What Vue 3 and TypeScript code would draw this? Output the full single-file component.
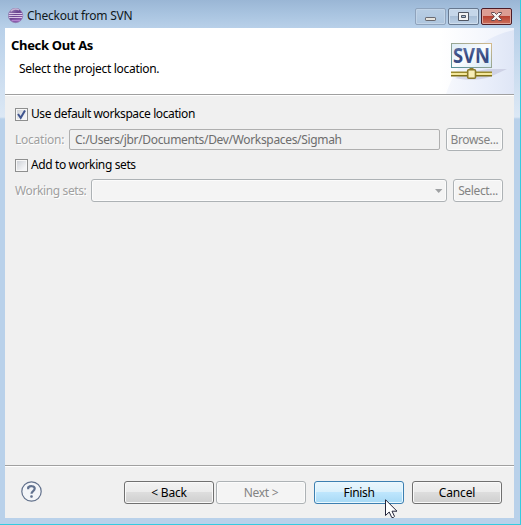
<script setup lang="ts">
import { ref } from 'vue'

const useDefault = ref(true)
const addToSets = ref(false)
const location = 'C:/Users/jbr/Documents/Dev/Workspaces/Sigmah'
</script>

<template>
  <div class="window">
    <header class="titlebar">
      <svg class="app-icon" width="16" height="16" viewBox="0 0 16 16">
        <defs>
          <linearGradient id="orb" x1="0" y1="0" x2="1" y2="1">
            <stop offset="0" stop-color="#a893c4" />
            <stop offset=".45" stop-color="#6c4590" />
            <stop offset="1" stop-color="#9660b8" />
          </linearGradient>
        </defs>
        <circle cx="7.6" cy="7.5" r="7.2" fill="url(#orb)" stroke="#8f78ae" stroke-width=".7" />
        <path d="M1 5.5h13.2M.7 7.5h14M1 9.5h13.2" stroke="#e4d5ee" stroke-width=".9" />
        <path d="M2.8 3.2a7 7 0 0 1 8.4-1.2" fill="none" stroke="#c7b6d4" stroke-width="1.4" />
        <path d="M3.5 12.5h8.6" stroke="#b483cf" stroke-width="1.4" />
      </svg>
      <span class="title">Checkout from SVN</span>
      <div class="controls">
        <div class="ctl min">
          <svg width="31" height="17" viewBox="0 0 31 17"><rect x="10.5" y="9.5" width="10" height="3" rx=".6" fill="#e6e4de" stroke="#686970" /></svg>
        </div>
        <div class="ctl">
          <svg width="31" height="17" viewBox="0 0 31 17"><path d="M10.5 4.5h10v8h-10zM13.5 7.5v2h4v-2z" fill="#f3f3f3" fill-rule="evenodd" stroke="#505663" /></svg>
        </div>
        <div class="ctl close">
          <svg width="31" height="17" viewBox="0 0 31 17"><path d="M10.5 4.5h3l2 2 2-2h3v1l-2.8 3 2.8 3v1h-3l-2-2-2 2h-3v-1l2.8-3-2.8-3z" fill="#f5f2f1" stroke="#654a50" /></svg>
        </div>
      </div>
    </header>

    <main class="client">
      <section class="banner">
        <div>
          <h1>Check Out As</h1>
          <p>Select the project location.</p>
        </div>
        <svg class="banner-art" width="110" height="66" viewBox="0 0 110 66">
          <defs>
            <linearGradient id="haze" x1="0" y1="0" x2="1" y2="0">
              <stop offset="0" stop-color="#fff" />
              <stop offset="1" stop-color="#eef2fb" />
            </linearGradient>
            <linearGradient id="wash" x1="0" y1="0" x2="1" y2="0">
              <stop offset="0" stop-color="#f6f8fd" />
              <stop offset=".6" stop-color="#e9eefa" />
              <stop offset="1" stop-color="#dfe6f6" />
            </linearGradient>
            <linearGradient id="card" x1="0" y1="0" x2="1" y2="1">
              <stop offset="0" stop-color="#dcebf6" />
              <stop offset=".5" stop-color="#fbfdfe" />
              <stop offset="1" stop-color="#d5e7f3" />
            </linearGradient>
            <linearGradient id="edge" x1="0" y1="1" x2="1" y2="0">
              <stop offset="0" stop-color="#538f9a" />
              <stop offset="1" stop-color="#d5bb8d" />
            </linearGradient>
            <linearGradient id="letters" x1="0" y1="0" x2="0" y2="1">
              <stop offset="0" stop-color="#7388b8" />
              <stop offset=".6" stop-color="#31447c" />
              <stop offset="1" stop-color="#536a9e" />
            </linearGradient>
          </defs>
          <rect x="36" width="74" height="66" fill="url(#haze)" />
          <path d="M110 2C78 9 54 30 42 66h68z" fill="url(#wash)" />
          <path d="M84 41h19l-15 7c-8 4-26 5-37 2l15-6z" fill="#b4b4cf" opacity=".45" />
          <rect x="47.5" y="15.5" width="40" height="24" fill="url(#card)" stroke="url(#edge)" />
          <text x="49" y="35" textLength="37" lengthAdjust="spacingAndGlyphs" class="svn">SVN</text>
          <path d="M47 44.2h41" stroke="#9a8a2c" stroke-width="1.4" />
          <path d="M47 46h41" stroke="#f3e79b" stroke-width="2.2" />
          <path d="M47 47.8h41" stroke="#807018" stroke-width="1.4" />
          <rect x="63.7" y="41.7" width="7.8" height="8.6" rx="1" fill="#f7edb7" stroke="#8b7a28" stroke-width="1.6" />
          <path d="M65.5 40.5h4" stroke="#8b7a28" />
        </svg>
      </section>

      <section class="body">
        <label class="check">
          <span class="box"><svg v-if="useDefault" width="11" height="11" viewBox="0 0 11 11"><path d="M2 5l2.7 3.8L9 1.5" fill="none" stroke="#40558f" stroke-width="2" /></svg></span>
          <span class="t-default">Use default workspace location</span>
        </label>
        <div class="row location">
          <span class="label t-location">Location:</span>
          <div class="field"><span class="t-path">{{ location }}</span></div>
          <button class="btn off browse" disabled><span class="t-browse">Browse...</span></button>
        </div>
        <label class="check second">
          <span class="box"><svg v-if="addToSets" width="11" height="11" viewBox="0 0 11 11"><path d="M2 5l2.7 3.8L9 1.5" fill="none" stroke="#40558f" stroke-width="2" /></svg></span>
          <span class="t-add">Add to working sets</span>
        </label>
        <div class="row sets">
          <span class="label t-sets">Working sets:</span>
          <div class="combo"><svg width="8" height="4" viewBox="0 0 8 4"><path d="M0 0h7.4L3.7 4z" fill="#9fa1a3" /></svg></div>
          <button class="btn off select" disabled><span class="t-select">Select...</span></button>
        </div>
      </section>

      <footer class="footer">
        <svg class="help" width="22" height="22" viewBox="0 0 22 22">
          <circle cx="10.5" cy="10.5" r="9.7" fill="#f3f5f8" stroke="#62718c" stroke-width="1.2" />
          <path d="M7.2 8.2V6.3c1.8-1.5 6.5-1.8 6.5 1.3 0 2.5-3.2 2.4-3.2 5.2" fill="none" stroke="#62728f" stroke-width="2.2" />
          <rect x="9.2" y="14.2" width="2.6" height="2.5" rx="1" fill="#62728f" />
        </svg>
        <button class="btn"><span class="t-back">&lt; Back</span></button>
        <button class="btn off" disabled><span class="t-next">Next &gt;</span></button>
        <button class="btn hot"><span class="t-finish">Finish</span></button>
        <button class="btn"><span class="t-cancel">Cancel</span></button>
      </footer>
    </main>

    <svg class="cursor" width="13" height="20" viewBox="0 0 13 20">
      <path d="M.5.7v15.8l3.7-3.5 2.5 5.4q1.8.8 2.8-1l-2.5-5.2h5z" fill="#fff" stroke="#25253a" stroke-width="1" />
    </svg>
  </div>
</template>

<style>
body {
  margin: 0;
  overflow: hidden;
}
</style>

<style scoped>
.window {
  position: relative;
  box-sizing: border-box;
  width: 521px;
  height: 525px;
  padding: 0 6px 6px 5px;
  border-right: 1px solid #35cbe0;
  border-bottom: 1px solid #35cbe0;
  background: linear-gradient(#9ab6d5 0, #a9c4e0 14px, #b8d0e9 28px, #dce8f5 117px, #b9d1ea 119px);
  font: 12px/16px "Noto Sans", "Open Sans", sans-serif;
  color: #000;
}
.titlebar {
  display: flex;
  height: 28px;
}
.app-icon { margin: 8px 0 0 3px; }
.title { margin: 8px 0 0 3px; white-space: nowrap; color: #101820; letter-spacing: -.24px; }
.controls { display: flex; gap: 2px; margin: 8px 2px 0 auto; }
.ctl {
  box-sizing: border-box;
  width: 31px;
  height: 17px;
  border: 1px solid #67788f;
  border-radius: 2px;
  background: linear-gradient(#c5d6e9 45%, #a9bfd7 50%, #bcd0e6);
  box-shadow: inset 0 0 0 1px #cfdeed;
}
.ctl svg { display: block; margin: -1px; }
.min {
  border-color: #8fa3bc;
  background: linear-gradient(#b9cee4, #adc5de);
  box-shadow: inset 0 0 0 1px #c2d4e7;
}
.close {
  border-color: #4d1c26;
  background: linear-gradient(#dc9c92 45%, #b94231 50%, #cc715e);
  box-shadow: inset 0 0 0 1px #dfa59b;
}
.client {
  display: flex;
  flex-direction: column;
  width: 509px;
  height: 490px;
  background: #f0f0f0;
}
.banner {
  display: flex;
  justify-content: space-between;
  height: 66px;
  border-bottom: 1px solid #a0a0a0;
  box-shadow: 0 1px #fff;
  background: #fff;
}
h1 { margin: 9px 0 0 6px; font-size: 13px; line-height: 16px; font-weight: 700; white-space: nowrap; letter-spacing: -.33px; }
p { margin: 8px 0 0 14px; white-space: nowrap; letter-spacing: -.3px; }
.banner-art { flex: none; }
.svn { font: 700 20.5px "Open Sans", sans-serif; fill: url(#letters); }
.body { flex: 1; padding: 11px 11px 0 10px; }
.check { display: flex; align-items: center; gap: 3px; height: 16px; white-space: nowrap; }
.box {
  box-sizing: border-box;
  width: 13px;
  height: 13px;
  border: 1px solid #8e8f8f;
  background: linear-gradient(135deg, #c9cdd3, #f3f4f6 75%);
  box-shadow: inset 0 0 0 1px #f7f7f7;
}
.box svg { display: block; }
.row { display: flex; align-items: center; height: 23px; margin-top: 6px; }
.second { margin-top: 6px; }
.label { flex: none; white-space: nowrap; color: #a0a0a0; text-shadow: 1px 1px #fff; }
.location .label { width: 54px; }
.sets .label { width: 76px; }
.t-default { letter-spacing: -.4px; }
.t-location { letter-spacing: -.24px; }
.t-path { letter-spacing: -.33px; }
.t-add, .t-sets { letter-spacing: -.38px; }
.t-browse, .t-select { letter-spacing: -.36px; }
.t-back, .t-cancel { letter-spacing: -.16px; }
.t-next, .t-finish { letter-spacing: -.33px; }
.field {
  box-sizing: border-box;
  display: flex;
  align-items: center;
  width: 371px;
  height: 21px;
  padding-left: 5px;
  border: 1px solid #afafaf;
  border-radius: 2px;
  color: #6d6d6d;
  white-space: nowrap;
}
.combo {
  box-sizing: border-box;
  display: flex;
  align-items: center;
  justify-content: flex-end;
  width: 356px;
  height: 23px;
  padding-right: 3px;
  border: 1px solid #adb2b5;
  border-radius: 3px;
  background: #f4f4f4;
  box-shadow: inset 0 0 0 1px #fbfbfb;
}
.btn {
  box-sizing: border-box;
  display: flex;
  flex: none;
  align-items: center;
  justify-content: center;
  width: 90px;
  height: 23px;
  padding: 0;
  border: 1px solid #707070;
  border-radius: 3px;
  background: linear-gradient(#f2f2f2, #ebebeb 49%, #dddddd 50%, #cfcfcf);
  box-shadow: inset 0 0 0 1px #f9f9f9;
  font: inherit;
  color: #000;
  white-space: nowrap;
}
.off { border-color: #adb2b5; background: #f4f4f4; box-shadow: inset 0 0 0 1px #fbfbfb; color: #838383; }
.hot {
  border-color: #3c7fb1;
  background: linear-gradient(#eaf6fd, #d9f0fc 49%, #bee6fd 50%, #a7d9f5);
  box-shadow: inset 0 0 0 1px #e9f8ff;
}
.browse { width: 57px; margin-left: 6px; }
.select { width: 50px; margin-left: 6px; }
.footer {
  display: flex;
  box-sizing: border-box;
  height: 53px;
  padding: 15px 0 0 16px;
  border-top: 1px solid #a0a0a0;
  box-shadow: inset 0 1px #fff;
}
.help { margin-right: 81px; }
.footer .off { margin-left: 2px; }
.footer .hot, .footer .hot + .btn { margin-left: 8px; }
.cursor { position: absolute; left: 385px; top: 499px; }
</style>
